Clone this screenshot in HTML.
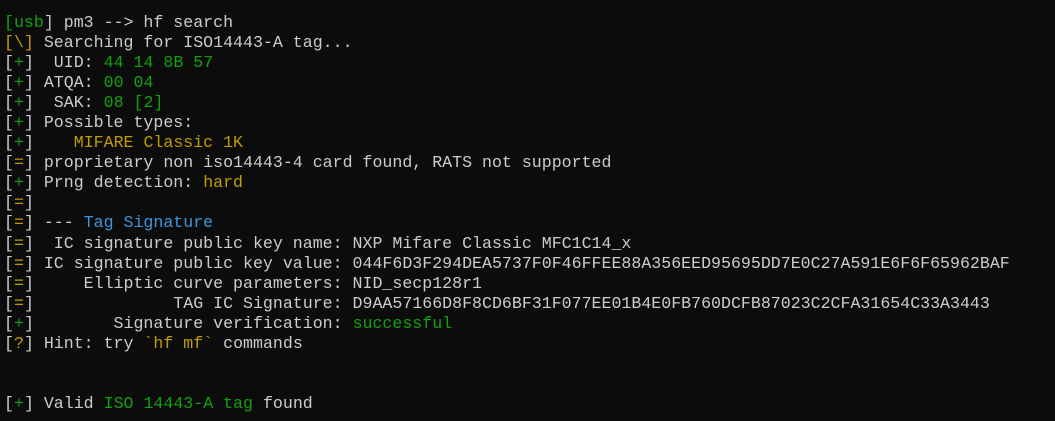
<!DOCTYPE html><html><head><style>
body{margin:0;background:#0c0c0c;width:1055px;height:421px;overflow:hidden}
pre{margin:0;padding:13px 0 0 4px;font-family:"Liberation Mono",monospace;font-size:16.6px;line-height:20.05px;color:#cccccc;letter-spacing:0}
.g{color:#13a10e}.y{color:#c19c00}.b{color:#3a96dd}
</style></head><body><pre><span class="g">[usb</span>] pm3 --&gt; hf search
<span class="y">[\]</span> Searching for ISO14443-A tag...
[<span class="g">+</span>]  UID: <span class="g">44 14 8B 57</span>
[<span class="g">+</span>] ATQA: <span class="g">00 04</span>
[<span class="g">+</span>]  SAK: <span class="g">08 [2]</span>
[<span class="g">+</span>] Possible types:
[<span class="g">+</span>]    <span class="y">MIFARE Classic 1K</span>
[<span class="y">=</span>] proprietary non iso14443-4 card found, RATS not supported
[<span class="g">+</span>] Prng detection: <span class="y">hard</span>
[<span class="y">=</span>]
[<span class="y">=</span>] --- <span class="b">Tag Signature</span>
[<span class="y">=</span>]  IC signature public key name: NXP Mifare Classic MFC1C14_x
[<span class="y">=</span>] IC signature public key value: 044F6D3F294DEA5737F0F46FFEE88A356EED95695DD7E0C27A591E6F6F65962BAF
[<span class="y">=</span>]     Elliptic curve parameters: NID_secp128r1
[<span class="y">=</span>]              TAG IC Signature: D9AA57166D8F8CD6BF31F077EE01B4E0FB760DCFB87023C2CFA31654C33A3443
[<span class="g">+</span>]        Signature verification: <span class="g">successful</span>
[<span class="y">?</span>] Hint: try <span class="y">`hf mf`</span> commands


[<span class="g">+</span>] Valid <span class="g">ISO 14443-A tag</span> found
</pre></body></html>
